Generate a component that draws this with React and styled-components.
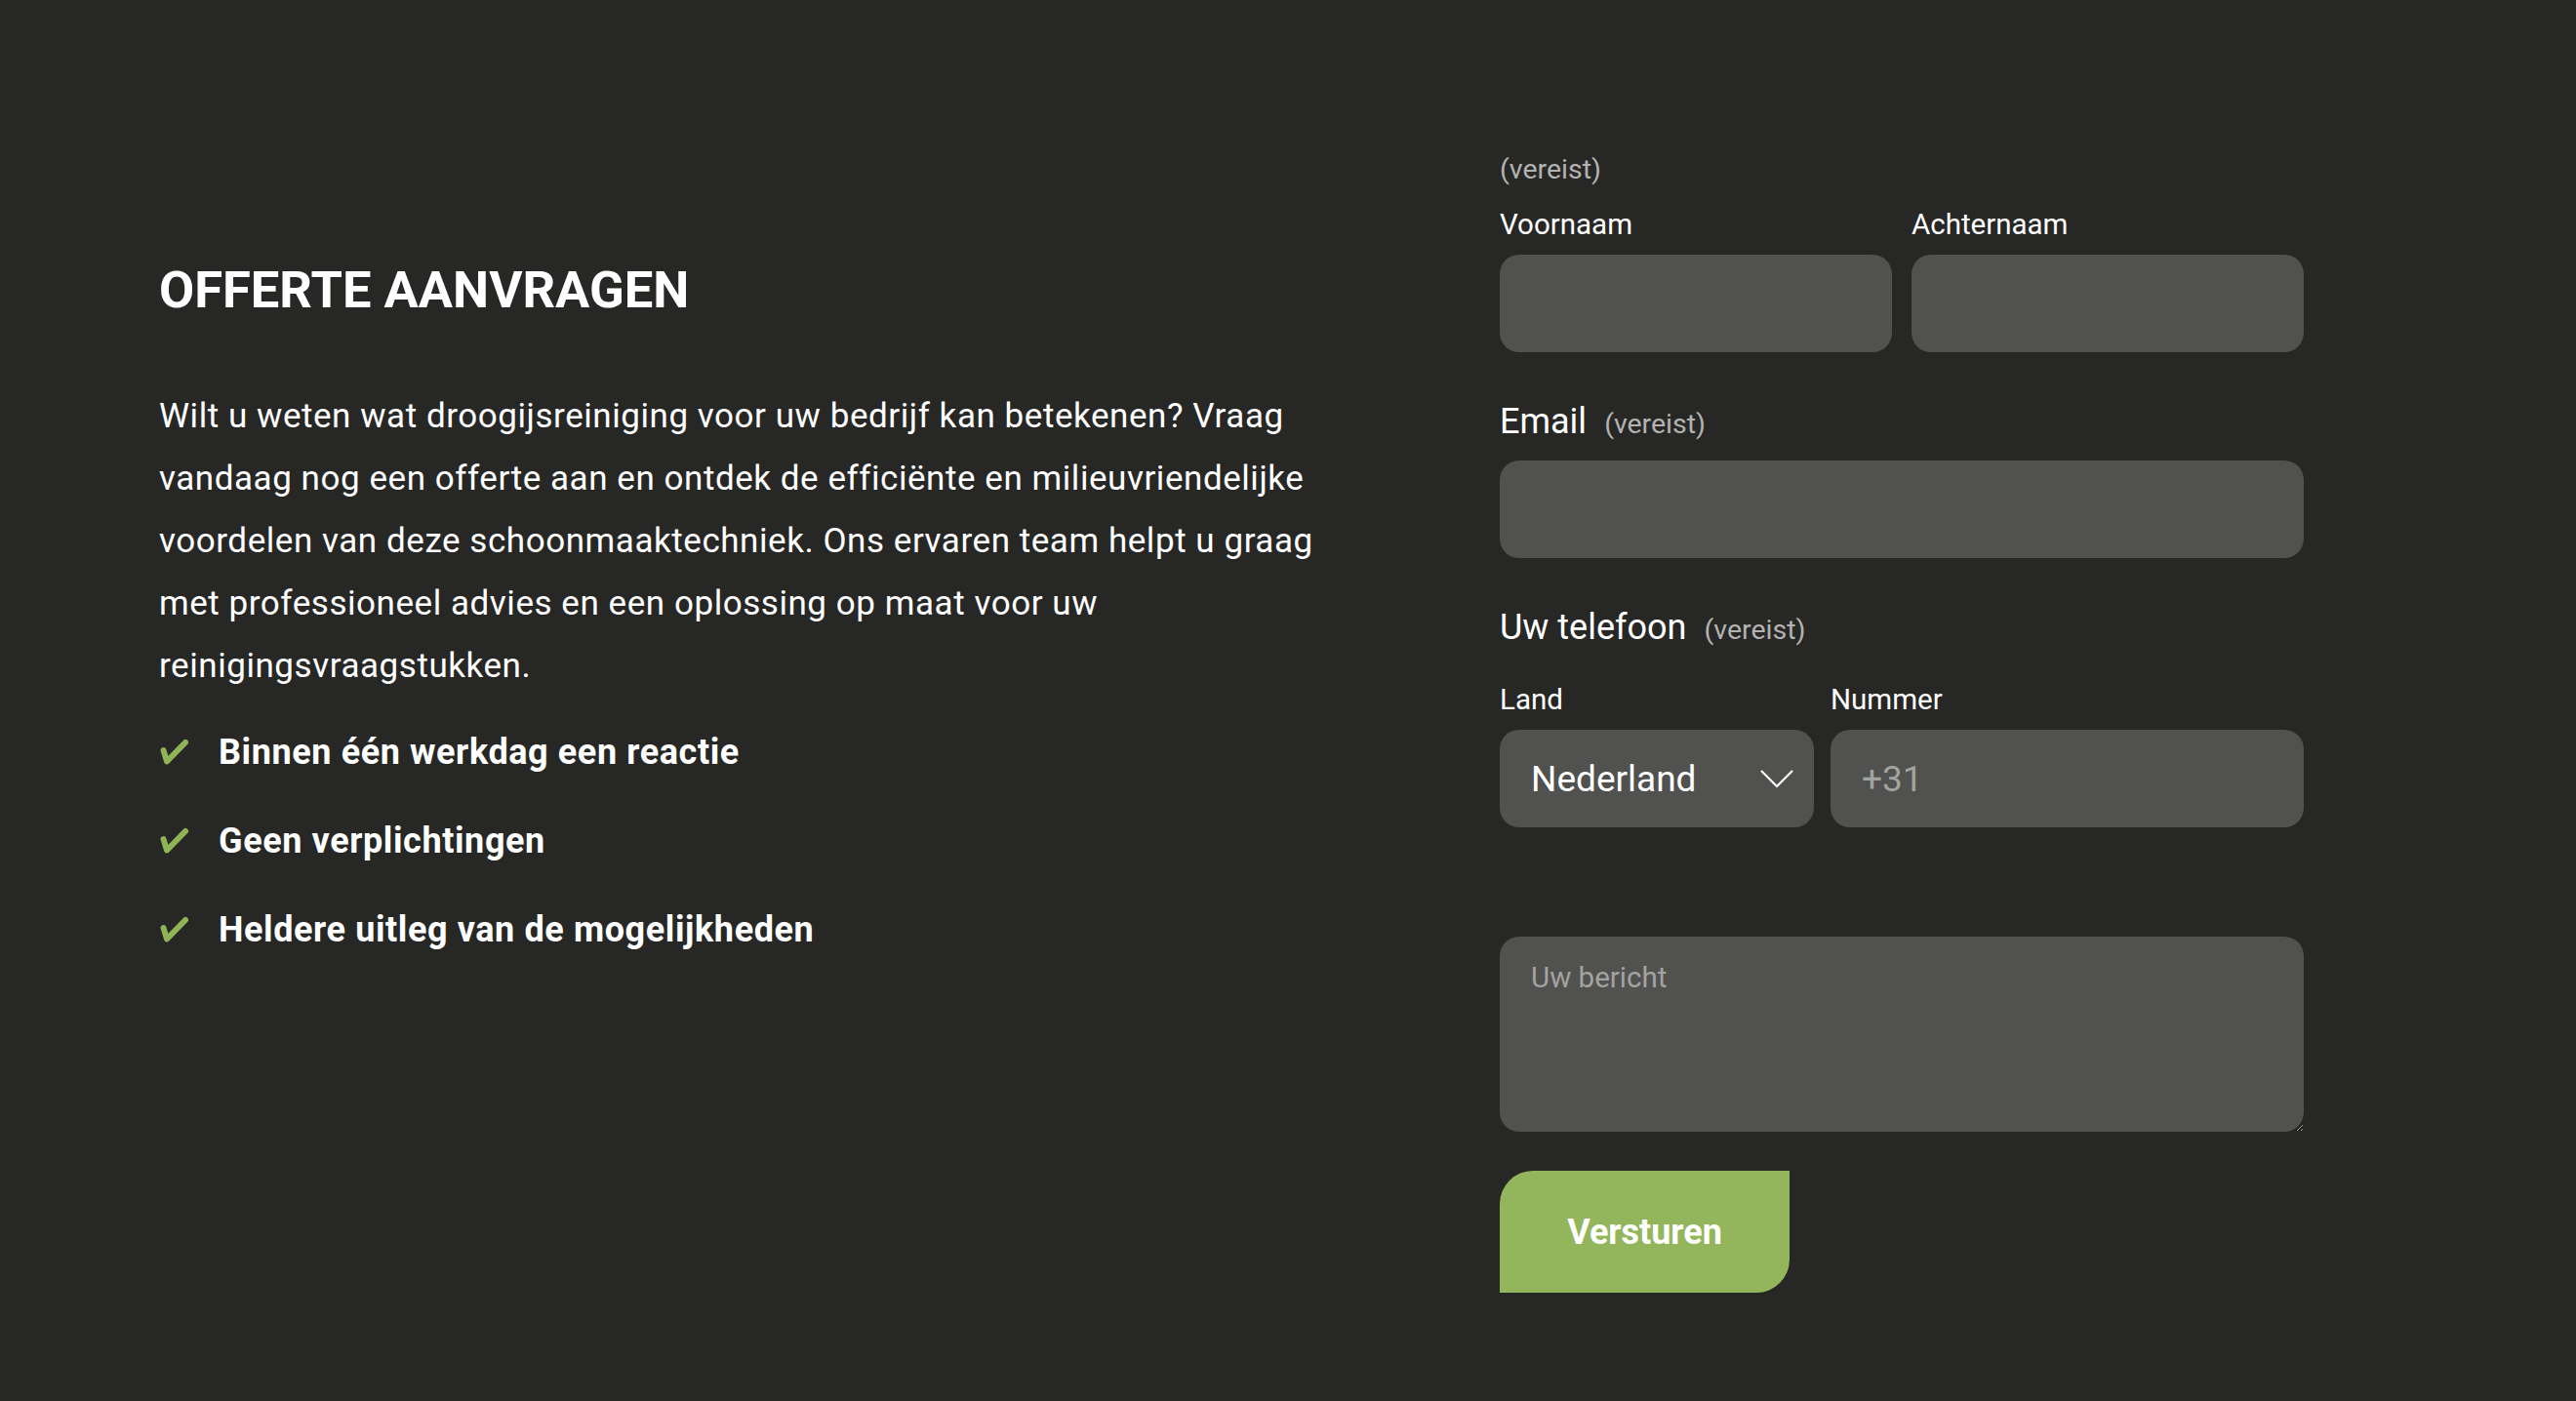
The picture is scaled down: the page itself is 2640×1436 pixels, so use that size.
import React from 'react';
import styled, { createGlobalStyle } from 'styled-components';

const GlobalStyle = createGlobalStyle`
  html, body {
    margin: 0;
    padding: 0;
    background: #272725;
  }
  body {
    font-family: Roboto, "Liberation Sans", sans-serif;
    color: #ffffff;
  }
`;

const Page = styled.div`
  min-height: 1436px;
  box-sizing: border-box;
  display: flex;
  align-items: flex-start;
  padding: 158px 0 0 163px;
  gap: 159px;
`;

const Intro = styled.section`
  width: 1215px;
  padding-top: 108px;
`;

const Title = styled.h2`
  margin: 0;
  font-size: 52.5px;
  line-height: 62px;
  font-weight: 700;
`;

const Text = styled.p`
  margin: 67px 0 0;
  font-size: 35px;
  line-height: 64px;
  letter-spacing: 0.55px;
  font-weight: 400;
`;

const Perks = styled.ul`
  list-style: none;
  margin: 31px 0 0;
  padding: 0;
  display: flex;
  flex-direction: column;
  gap: 41px;
`;

const Perk = styled.li`
  display: flex;
  align-items: center;
  gap: 30px;
  font-size: 36px;
  line-height: 50px;
  letter-spacing: 0.6px;
  font-weight: 700;
`;

const Check = styled.svg`
  width: 31px;
  height: 29px;
  flex-shrink: 0;
  margin-top: -2px;
`;

const Form = styled.form`
  width: 824px;
  display: flex;
  flex-direction: column;
`;

const Required = styled.span`
  font-size: 28.5px;
  line-height: 32px;
  color: #b3b3b1;
  font-weight: 400;
`;

const Row = styled.div`
  display: grid;
  grid-template-columns: ${(p) => p.$cols || '1fr 1fr'};
  gap: ${(p) => p.$gap || '20px'};
  margin-top: ${(p) => p.$top || '0'};
`;

const Field = styled.label`
  display: flex;
  flex-direction: column;
  gap: 14px;
`;

const SmallLabel = styled.span`
  font-size: 29.5px;
  line-height: 34px;
`;

const Legend = styled.div`
  display: flex;
  align-items: baseline;
  gap: 18px;
  margin-top: ${(p) => p.$top || '51px'};
  font-size: 36px;
  line-height: 40px;
`;

const Input = styled.input`
  box-sizing: border-box;
  width: 100%;
  height: 100px;
  border: none;
  border-radius: 20px;
  background: #51514f;
  padding: 0 32px;
  font-family: inherit;
  font-size: 37px;
  color: #ffffff;
  outline: none;
  margin-top: ${(p) => p.$top || '0'};

  &::placeholder {
    color: #a3a3a1;
  }
`;

const SelectBox = styled.div`
  box-sizing: border-box;
  height: 100px;
  border-radius: 20px;
  background: #51514f;
  padding: 0 20px 0 32px;
  display: flex;
  align-items: center;
  justify-content: space-between;
  font-size: 37px;
`;

const Chevron = styled.svg`
  width: 36px;
  height: 20px;
`;

const Message = styled.textarea`
  box-sizing: border-box;
  width: 100%;
  height: 200px;
  margin-top: 112px;
  border: none;
  border-radius: 20px;
  background: #51514f;
  padding: 24px 32px;
  font-family: inherit;
  font-size: 29.5px;
  line-height: 36px;
  color: #ffffff;
  outline: none;

  &::placeholder {
    color: #a3a3a1;
  }
`;

const Submit = styled.button`
  align-self: flex-start;
  margin-top: 40px;
  width: 297px;
  height: 125px;
  border: none;
  border-radius: 34px 0 34px 0;
  background: #93b55b;
  color: #ffffff;
  font-family: inherit;
  font-size: 36px;
  font-weight: 700;
  cursor: pointer;
`;

const perks = [
  'Binnen één werkdag een reactie',
  'Geen verplichtingen',
  'Heldere uitleg van de mogelijkheden',
];

function CheckIcon() {
  return (
    <Check viewBox="0 0 31 29">
      <path
        d="M4.5 13 L8 24.5 L27 5"
        fill="none"
        stroke="#8fb456"
        strokeWidth="6"
        strokeLinecap="round"
        strokeLinejoin="round"
      />
    </Check>
  );
}

export default function App() {
  return (
    <>
      <GlobalStyle />
      <Page>
        <Intro>
          <Title>OFFERTE AANVRAGEN</Title>
          <Text>
            Wilt u weten wat droogijsreiniging voor uw bedrijf kan betekenen? Vraag vandaag nog een
            offerte aan en ontdek de efficiënte en milieuvriendelijke voordelen van deze
            schoonmaaktechniek. Ons ervaren team helpt u graag met professioneel advies en een
            oplossing op maat voor uw reinigingsvraagstukken.
          </Text>
          <Perks>
            {perks.map((p) => (
              <Perk key={p}>
                <CheckIcon />
                {p}
              </Perk>
            ))}
          </Perks>
        </Intro>

        <Form onSubmit={(e) => e.preventDefault()}>
          <Required>(vereist)</Required>
          <Row $top="23px">
            <Field>
              <SmallLabel>Voornaam</SmallLabel>
              <Input type="text" />
            </Field>
            <Field>
              <SmallLabel>Achternaam</SmallLabel>
              <Input type="text" />
            </Field>
          </Row>

          <Legend>
            Email<Required>(vereist)</Required>
          </Legend>
          <Input type="email" $top="20px" />

          <Legend>
            Uw telefoon<Required>(vereist)</Required>
          </Legend>
          <Row $cols="322px 1fr" $gap="17px" $top="37px">
            <Field as="div">
              <SmallLabel>Land</SmallLabel>
              <SelectBox>
                Nederland
                <Chevron viewBox="0 0 36 20">
                  <polyline points="2,2 18,18 34,2" fill="none" stroke="#ffffff" strokeWidth="2.2" />
                </Chevron>
              </SelectBox>
            </Field>
            <Field>
              <SmallLabel>Nummer</SmallLabel>
              <Input type="tel" placeholder="+31" />
            </Field>
          </Row>

          <Message placeholder="Uw bericht" />
          <Submit type="submit">Versturen</Submit>
        </Form>
      </Page>
    </>
  );
}
